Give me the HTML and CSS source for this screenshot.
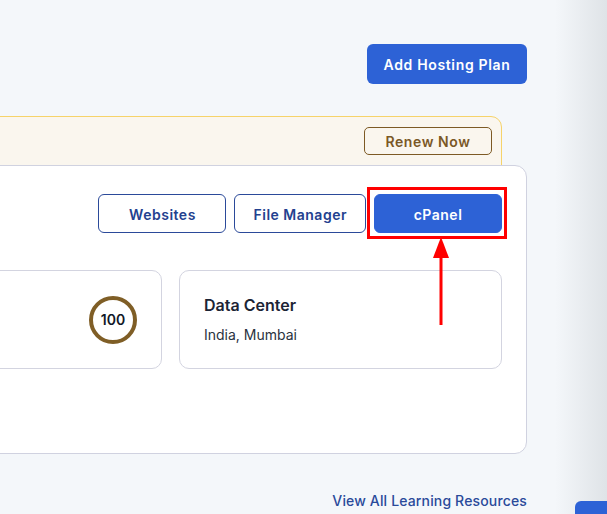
FILE: index.html
```html
<!DOCTYPE html>
<html lang="en">
<head>
<meta charset="utf-8">
<title>Hosting</title>
<link rel="stylesheet" href="styles.css">
</head>
<body>
<div class="main">
  <div class="header">
    <button class="btn-primary">Add Hosting Plan</button>
  </div>
  <div class="banner">
    <button class="btn-renew">Renew Now</button>
  </div>
  <div class="card">
    <div class="actions">
      <button class="btn btn-outline">Websites</button>
      <button class="btn btn-outline">File Manager</button>
      <div class="highlight-wrap">
        <button class="btn btn-fill">cPanel</button>
        <span class="highlight-box"></span>
        <svg class="arrow" width="20" height="90" viewBox="0 0 20 90">
          <polygon points="10,0 2,21 18,21" fill="#ff0000"/>
          <rect x="8.5" y="18" width="3" height="70" fill="#ff0000"/>
        </svg>
      </div>
    </div>
    <div class="stats">
      <div class="stat stat-score">
        <div class="stat-label"></div>
        <div class="ring">100</div>
      </div>
      <div class="stat">
        <div class="stat-title">Data Center</div>
        <div class="stat-value">India, Mumbai</div>
      </div>
    </div>
  </div>
  <div class="footer-link">
    <a href="#" class="link">View All Learning Resources</a>
  </div>
</div>
<button class="float-btn" aria-label="Help"></button>
</body>
</html>
```
FILE: styles.css
```css
html, body {
  margin: 0;
  height: 100%;
}
body {
  overflow: hidden;
  font-family: Inter, "Noto Sans", sans-serif;
  background: linear-gradient(to right, #f4f7fa 0, #f4f7fa 555px, #dfe3e7 607px);
  color: #1c2435;
}
button {
  font-family: inherit;
  cursor: pointer;
}
.main {
  width: 713px;
  margin-left: -186px;
  padding-top: 44px;
}
.header {
  display: flex;
  justify-content: flex-end;
}
.btn-primary {
  box-sizing: border-box;
  height: 40px;
  width: 160px;
  padding: 0;
  border: none;
  border-radius: 6px;
  background: #2d62d6;
  color: #ffffff;
  font-size: 14px;
  font-weight: 600;
  letter-spacing: 0.65px;
}
.banner {
  margin-top: 32px;
  margin-right: 25px;
  background: #faf6ee;
  border: 1px solid #f6d36a;
  border-radius: 0 11px 0 0;
  padding: 10px 9px 20px;
  display: flex;
  justify-content: flex-end;
}
.btn-renew {
  height: 28px;
  width: 128px;
  border: 1.5px solid #7d5a24;
  border-radius: 5px;
  background: transparent;
  color: #7a5826;
  font-size: 14px;
  font-weight: 600;
  letter-spacing: 0.6px;
  padding: 0;
}
.card {
  position: relative;
  margin-top: -11px;
  background: #ffffff;
  border: 1px solid #d0d2e0;
  border-radius: 12px;
  padding: 28px 24px 84px;
}
.actions {
  display: flex;
  justify-content: flex-end;
  gap: 8px;
}
.btn {
  box-sizing: border-box;
  height: 39px;
  min-width: 128px;
  padding: 1px 18px 0;
  border-radius: 6px;
  font-size: 14px;
  font-weight: 600;
  letter-spacing: 0.5px;
}
.btn-outline {
  background: #ffffff;
  border: 1px solid #2b4a9a;
  color: #23418f;
}
.btn-fill {
  background: #2d62d6;
  border: 1px solid #2d62d6;
  color: #ffffff;
  display: block;
}
.highlight-wrap {
  position: relative;
}
.highlight-box {
  position: absolute;
  top: -7px;
  left: -7px;
  right: -5px;
  bottom: -6px;
  border: 3px solid #ff0000;
  pointer-events: none;
}
.arrow {
  position: absolute;
  left: 57px;
  top: 43px;
  display: block;
}
.stats {
  display: grid;
  grid-template-columns: 1fr 1fr;
  gap: 17px;
  margin-top: 37px;
}
.stat {
  box-sizing: border-box;
  height: 99px;
  border: 1px solid #d3d4e0;
  border-radius: 10px;
  padding: 22px 24px;
}
.stat-score {
  display: flex;
  justify-content: space-between;
  align-items: center;
  padding-top: 0;
  padding-bottom: 0;
}
.ring {
  box-sizing: border-box;
  width: 48px;
  height: 48px;
  border: 4px solid #7f5e26;
  border-radius: 50%;
  display: flex;
  align-items: center;
  justify-content: center;
  font-size: 14px;
  font-weight: 600;
  color: #111827;
}
.stat-title {
  font-size: 16px;
  line-height: 24px;
  font-weight: 600;
  color: #1c2435;
}
.stat-value {
  margin-top: 8px;
  font-size: 14px;
  line-height: 20px;
  color: #2a3240;
}
.footer-link {
  display: flex;
  justify-content: flex-end;
  margin-top: 37px;
}
.link {
  font-size: 14px;
  line-height: 20px;
  font-weight: 500;
  letter-spacing: 0.15px;
  color: #2a4a9a;
  text-decoration: none;
}
.float-btn {
  position: fixed;
  left: 575px;
  top: 501px;
  width: 60px;
  height: 40px;
  border: none;
  border-radius: 6px;
  background: #2d62d6;
}
```
